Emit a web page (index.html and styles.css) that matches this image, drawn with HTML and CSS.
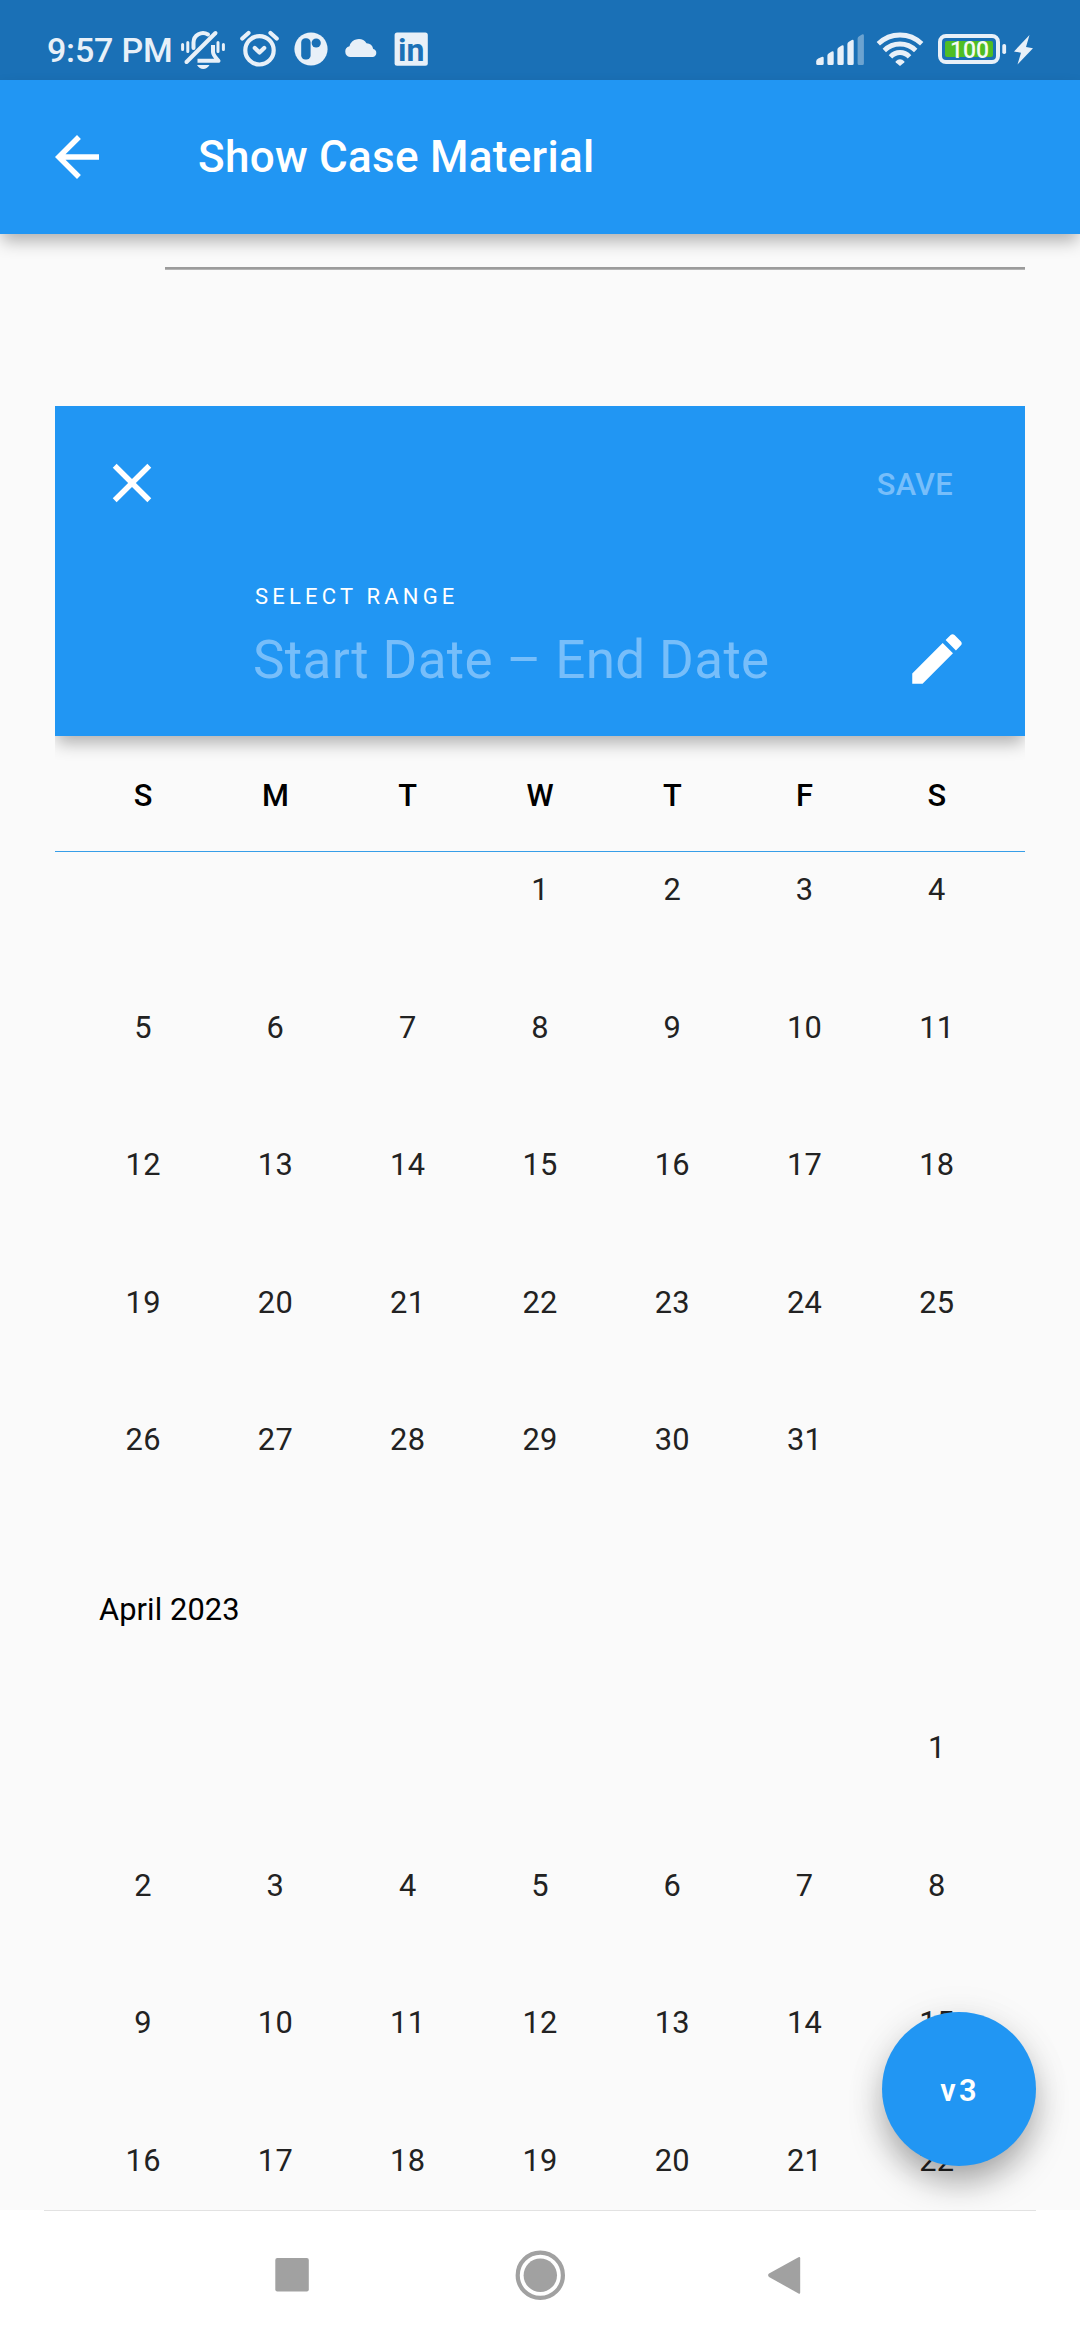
FILE: index.html
```html
<!DOCTYPE html>
<html lang="en">
<head>
<meta charset="utf-8">
<title>Show Case Material</title>
<link rel="stylesheet" href="styles.css">
</head>
<body>
<div class="screen">
  <header class="status">
    <span class="clock">9:57 PM</span>
    <svg class="ico bell" viewBox="178 20 52 60"><g fill="none" stroke="currentColor" stroke-width="3.4" stroke-linecap="round"><path d="M182.6 44.5v5M187.8 42.5v9M218 42.5v9M223.4 44.5v5" stroke-width="3"/><path d="M186.5 62L215.5 33" stroke-width="4"/><path d="M193.5 48v-5.500a9.500 9.500 0 0 1 14.500-8" stroke-width="4"/><path d="M213 45v7q0 3 5.500 8.800H197.500" stroke-width="4" stroke-linecap="butt" stroke-linejoin="round"/></g><path d="M197 65h12.500q-2.500 4-6.250 4T197 65z" fill="currentColor"/></svg>
    <svg class="ico alarm" viewBox="236 20 48 60"><g fill="none" stroke="currentColor" stroke-width="4.200" stroke-linecap="round" stroke-linejoin="round"><circle cx="259.500" cy="50.300" r="14.200"/><path d="M242.300 38.500L248.500 33M276.700 38.500L270.500 33M254.800 48l4.700 4.500 4.700-4.500"/></g></svg>
    <svg class="ico dots" viewBox="290 20 42 60"><circle cx="311" cy="49" r="16.600" fill="currentColor"/><rect x="301.200" y="38.300" width="9.400" height="21.300" rx="4.200" class="hole"/><circle cx="316.200" cy="43" r="4.600" class="hole"/></svg>
    <svg class="ico cloud" viewBox="340 20 42 60"><path d="M350 57a5.500 5.500 0 0 1-.5-10.800 9.500 9.500 0 0 1 17-3 7.200 7.200 0 0 1 6.700 5.800 4.100 4.100 0 0 1-.2 8z" fill="currentColor"/></svg>
    <svg class="ico linked" viewBox="390 20 42 60"><rect x="394.600" y="32.500" width="33.200" height="33.300" rx="2.500" fill="currentColor"/><text x="411.200" y="60.500" text-anchor="middle" class="in">in</text></svg>
    <span class="space"></span>
    <svg class="ico signal" viewBox="812 20 56 60"><g fill="currentColor"><path d="M816.200 61.500q0-2 2-3l3.500-1.600q2-.6 2 1.200v5.400q0 1.500-1.500 1.500h-4.500q-1.500 0-1.500-1.500z"/><path d="M827.400 55.500q0-1.500 1.500-2.300l2.900-1.700q1.900-.8 1.900 1.200v10.800q0 1.500-1.500 1.500h-3.300q-1.500 0-1.500-1.500z"/><path d="M837.400 49.500q0-1.500 1.500-2.300l2.900-1.700q1.900-.8 1.900 1.200v16.800q0 1.500-1.500 1.500h-3.300q-1.500 0-1.500-1.500z"/><path d="M847.400 44q0-1.500 1.500-2.300l2.900-1.700q1.900-.8 1.900 1.200v22.300q0 1.500-1.500 1.500h-3.300q-1.500 0-1.500-1.500z"/><path opacity=".4" d="M857.600 38.500q0-1.500 1.500-2.300l2.900-1.700q1.900-.8 1.900 1.200v27.800q0 1.500-1.500 1.500h-3.300q-1.500 0-1.500-1.500z"/></g></svg>
    <svg class="ico wifi" viewBox="874 20 52 60"><g fill="none" stroke="currentColor" stroke-width="4.800"><path d="M878.300 43.800Q887.500 35 900 35t21.700 8.800"/><path d="M884.300 50.500Q890.800 44 900 44t15.700 6.500"/><path d="M890.500 56.800Q894.500 52.500 900 52.500t9.500 4.300"/></g><path d="M895.500 61.500q4.500-4.500 9 0l-.3 1-4.200 3.600-4.200-3.600z" fill="currentColor"/></svg>
    <svg class="ico battery" viewBox="934 20 76 60"><rect x="940" y="36" width="58" height="26" rx="6" fill="none" stroke="currentColor" stroke-width="4"/><rect x="945" y="41" width="48" height="16" rx="2" class="charge"/><rect x="1002.300" y="44" width="3.800" height="10" rx="1.800" fill="currentColor"/><text x="969.500" y="57.800" text-anchor="middle" class="pct">100</text></svg>
    <svg class="ico bolt" viewBox="1012 20 24 60"><path d="M1029.500 35L1014 51.500l7 1.200L1017.500 64.500 1033 48.300l-7-1.200z" fill="currentColor"/></svg>
  </header>

  <div class="appbar">
    <svg class="back" viewBox="0 0 24 24"><path d="M20 11H7.830l5.590-5.590L12 4l-8 8 8 8 1.410-1.410L7.830 13H20v-2z"/></svg>
    <h1 class="title">Show Case Material</h1>
  </div>

  <main class="content">
    <div class="rule"></div>
    <section class="picker">
      <div class="head">
        <div class="actions">
          <svg class="close" viewBox="0 0 24 24"><path d="M19 6.410L17.590 5 12 10.590 6.410 5 5 6.410 10.590 12 5 17.590 6.410 19 12 13.410 17.590 19 19 17.590 13.410 12z"/></svg>
          <span class="save">SAVE</span>
        </div>
        <div class="range">
          <div class="labels">
            <div class="caption">SELECT RANGE</div>
            <div class="dates">Start Date – End Date</div>
          </div>
          <svg class="edit" viewBox="0 0 24 24"><path d="M3 17.250V21h3.750L17.810 9.940l-3.750-3.750L3 17.250zM20.710 7.040c.39-.39.39-1.020 0-1.410l-2.340-2.340c-.39-.39-1.020-.39-1.410 0l-1.830 1.830 3.750 3.750 1.830-1.830z"/></svg>
        </div>
      </div>
      <div class="week"><span>S</span><span>M</span><span>T</span><span>W</span><span>T</span><span>F</span><span>S</span></div>
      <div class="months">
        <div class="days march">
          <span class="from-wed">1</span><span>2</span><span>3</span><span>4</span>
          <span>5</span><span>6</span><span>7</span><span>8</span><span>9</span><span>10</span><span>11</span>
          <span>12</span><span>13</span><span>14</span><span>15</span><span>16</span><span>17</span><span>18</span>
          <span>19</span><span>20</span><span>21</span><span>22</span><span>23</span><span>24</span><span>25</span>
          <span>26</span><span>27</span><span>28</span><span>29</span><span>30</span><span>31</span>
        </div>
        <h2 class="month">April 2023</h2>
        <div class="days">
          <span class="from-sat">1</span>
          <span>2</span><span>3</span><span>4</span><span>5</span><span>6</span><span>7</span><span>8</span>
          <span>9</span><span>10</span><span>11</span><span>12</span><span>13</span><span>14</span><span>15</span>
          <span>16</span><span>17</span><span>18</span><span>19</span><span>20</span><span>21</span><span>22</span>
        </div>
      </div>
    </section>
    <button class="fab">v3</button>
  </main>

  <nav class="nav">
    <svg class="keys" viewBox="44 2211 992 129"><g fill="#a1a1a1"><rect x="275.300" y="2258" width="33.500" height="33.500" rx="2"/><circle cx="540.300" cy="2275.300" r="16.700"/><circle cx="540.300" cy="2275.300" r="22.600" fill="none" stroke="#a1a1a1" stroke-width="4.200"/><path d="M798.500 2257.300L769 2273.500q-1.800 1.700 0 3.400l29.500 16.600q1.700.7 1.700-1v-34.200q0-1.700-1.700-1z"/></g></svg>
  </nav>
</div>
</body>
</html>
```
FILE: styles.css
```css
* { box-sizing: border-box; }
body { margin: 0; background: #fafafa; font-family: Roboto, sans-serif; }
h1, h2 { margin: 0; }

.screen {
  display: flex;
  flex-direction: column;
  width: 1080px;
  height: 2340px;
  overflow: hidden;
  background: #fafafa;
}

/* status bar */
.status {
  flex: none;
  display: flex;
  height: 80px;
  padding: 20px 44px 0 47px;
  background: #1a70b6;
  color: #e8f0f8;
}
.clock {
  width: 131px;
  font-size: 34px;
  font-weight: 500;
  line-height: 60px;
  letter-spacing: -0.2px;
  white-space: nowrap;
}
.ico { flex: none; height: 60px; margin-right: 8px; }
.bell { width: 52px; margin-right: 6px; }
.alarm { width: 48px; margin-right: 6px; }
.dots, .cloud, .linked { width: 42px; }
.hole { fill: #1a70b6; }
.in { font: 700 32px Roboto, sans-serif; fill: #1a70b6; }
.space { flex: 1; }
.signal { width: 56px; margin-right: 6px; }
.wifi { width: 52px; }
.battery { width: 76px; margin-right: 2px; }
.bolt { width: 24px; margin-right: 0; }
.charge { fill: #4fbd24; }
.pct { font: 500 23px Roboto, sans-serif; fill: #f4faf4; }

/* app bar */
.appbar {
  flex: none;
  position: relative;
  z-index: 2;
  display: flex;
  align-items: center;
  height: 154px;
  padding-left: 44px;
  background: #2196f3;
  color: #fff;
  box-shadow: 0 9px 16px -2px rgba(0, 0, 0, .3);
}
.back { width: 66px; height: 66px; margin-right: 88px; fill: #fff; }
.title { font-size: 44px; font-weight: 500; letter-spacing: .28px; }

/* scrolling content */
.content {
  flex: 1;
  position: relative;
  min-height: 0;
  padding: 33px 55px 0;
  overflow: hidden;
}
.rule {
  height: 3px;
  margin: 0 0 136px 110px;
  background: linear-gradient(#9b9b9b 2px, #b4b4b4 2px);
}
.picker { overflow: hidden; }
.head {
  position: relative;
  display: flex;
  flex-direction: column;
  height: 330px;
  background: #2196f3;
  color: #fff;
  box-shadow: 0 9px 16px -2px rgba(0, 0, 0, .3);
}
.actions {
  display: flex;
  align-items: center;
  justify-content: space-between;
  height: 154px;
  padding: 0 72px 0 44px;
}
.close { width: 66px; height: 66px; fill: #fff; }
.save { font-size: 30.8px; font-weight: 500; letter-spacing: .3px; color: #77befa; padding-top: 2px; }
.range {
  display: flex;
  align-items: center;
  justify-content: space-between;
  height: 165px;
  padding: 18px 55px 0 198px;
}
.labels { padding-bottom: 34px; }
.caption { padding-left: 2px; font-size: 22px; line-height: 44px; letter-spacing: 4.2px; margin-bottom: 7px; }
.dates { font-size: 53px; line-height: 68px; letter-spacing: .36px; color: #77befa; white-space: nowrap; }
.edit { width: 66px; height: 66px; fill: #fff; margin-top: 15px; }

.week, .days {
  display: grid;
  grid-template-columns: repeat(7, 1fr);
  padding: 0 22px;
  font-size: 30.8px;
  text-align: center;
}
.week {
  height: 116px;
  border-bottom: 1px solid #379ee8;
  line-height: 120px;
  font-weight: 500;
  color: #000;
}
.months { overflow: hidden; }
.days {
  grid-auto-rows: 137.5px;
  line-height: 137.5px;
  letter-spacing: .3px;
  color: #222;
}
.march { margin-top: -30.750px; }
.from-wed { grid-column: 4; }
.from-sat { grid-column: 7; }
.month {
  padding: 32.250px 0 .5px 44px;
  font-size: 30.8px;
  font-weight: 400;
  line-height: 137.5px;
  letter-spacing: .1px;
  color: #000;
}

.fab {
  position: absolute;
  right: 44px;
  bottom: 44px;
  width: 154px;
  height: 154px;
  padding: 3px 0 0 2px;
  border: 0;
  border-radius: 50%;
  background: #2196f3;
  color: #fff;
  font: 600 30.8px Roboto, sans-serif;
  letter-spacing: 3.3px;
  box-shadow: 0 18px 34px -3px rgba(0, 0, 0, .34), 0 3px 44px rgba(0, 0, 0, .06);
}

/* navigation bar */
.nav {
  flex: none;
  height: 130px;
  padding: 0 44px;
  background: #fff;
}
.keys { display: block; width: 992px; height: 130px; border-top: 1px solid #e2e2e2; }
```
